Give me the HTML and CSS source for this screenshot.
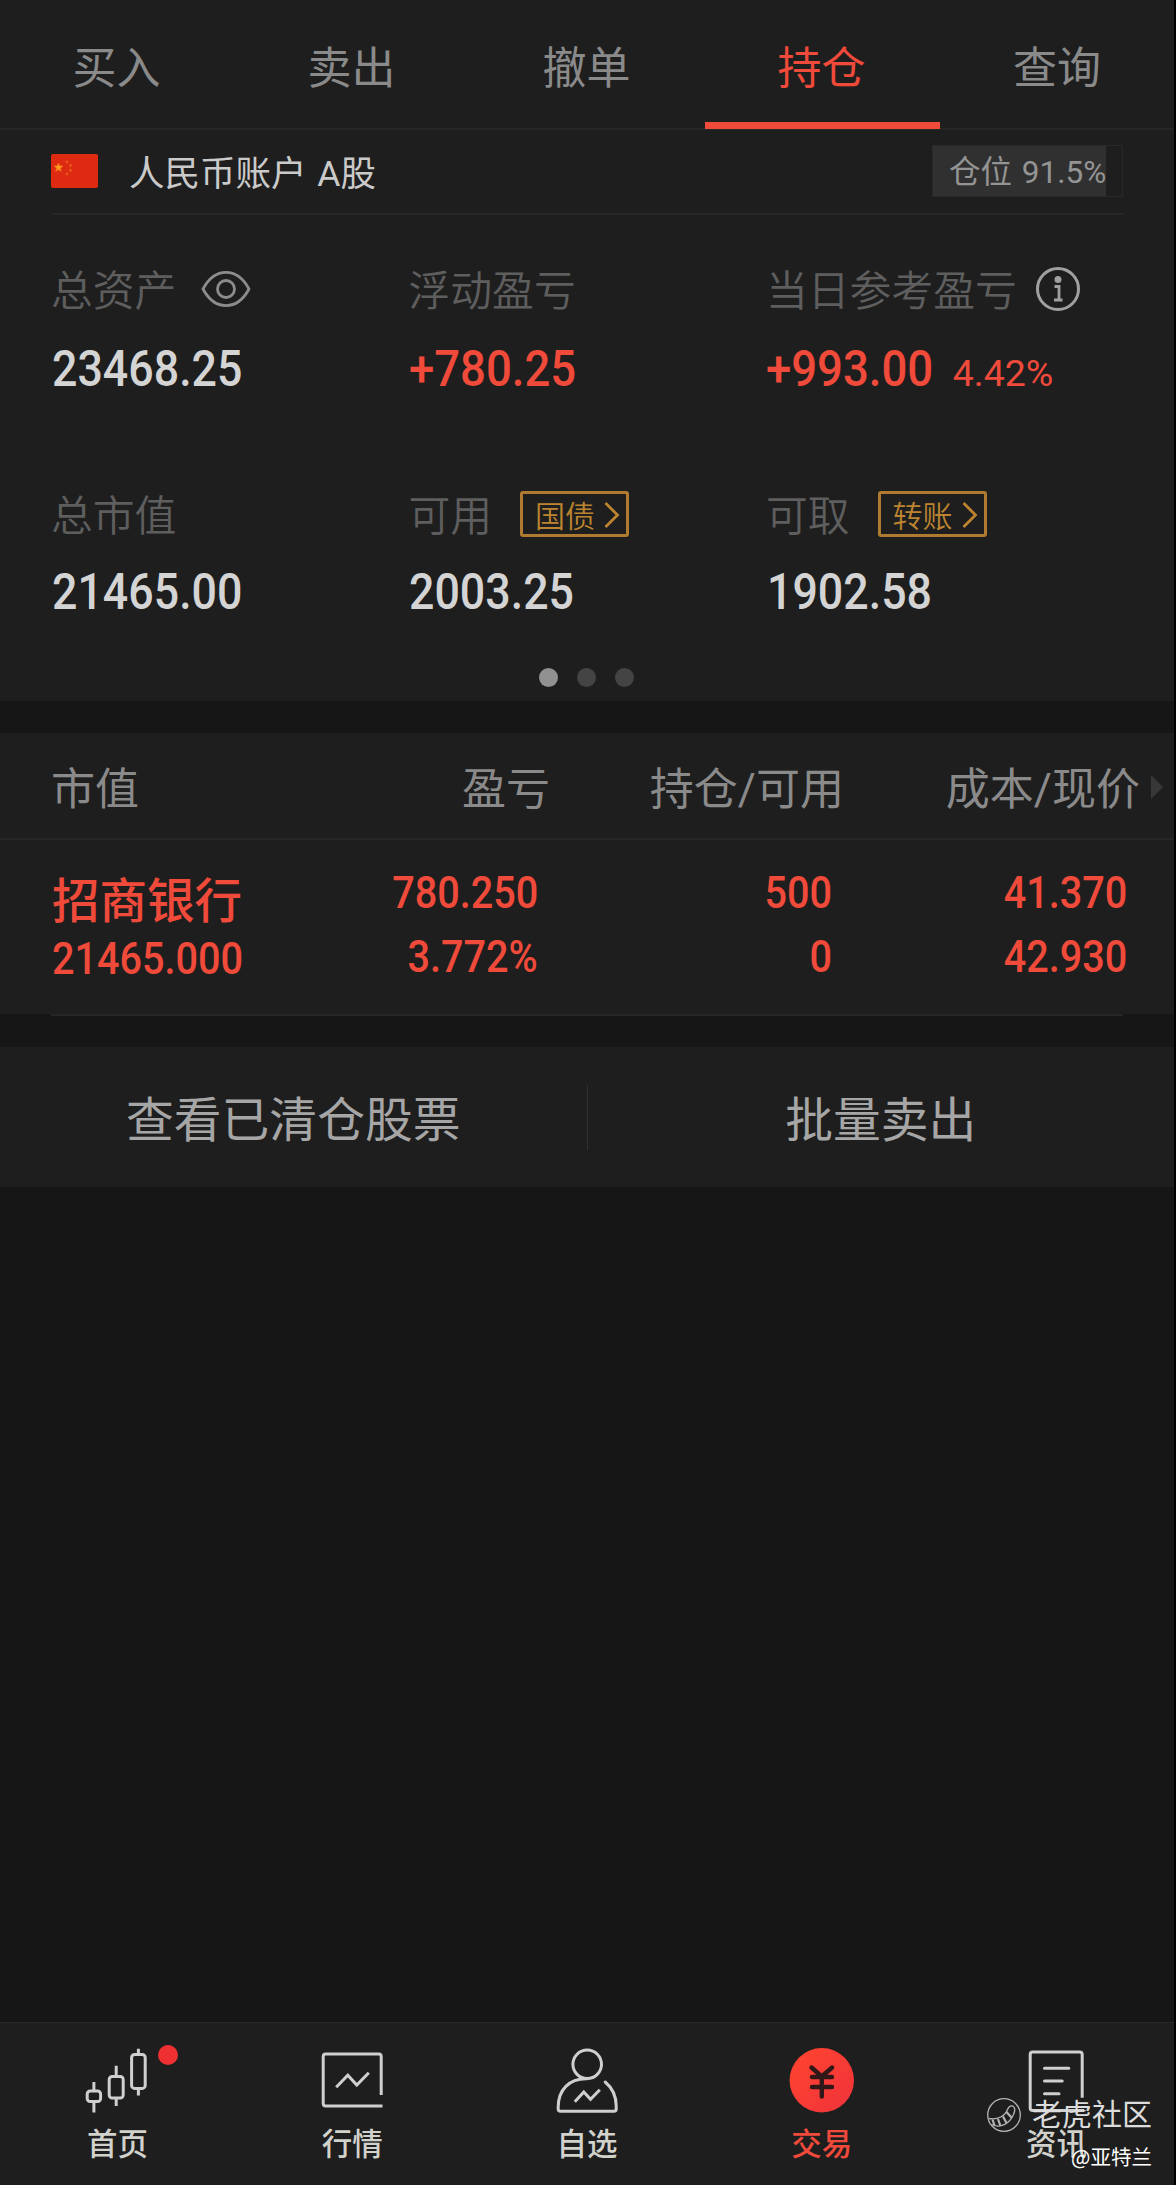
FILE: index.html
```html
<!DOCTYPE html>
<html lang="zh-CN">
<head>
<meta charset="utf-8">
<title>持仓</title>
<link rel="stylesheet" href="styles.css">
</head>
<body>
<div class="app">
  <nav class="tabs">
    <a class="tab">买入</a>
    <a class="tab">卖出</a>
    <a class="tab">撤单</a>
    <a class="tab tab-active">持仓</a>
    <a class="tab">查询</a>
  </nav>

  <section class="summary">
    <header class="account">
      <svg class="flag" viewBox="0 0 47 34">
        <rect width="47" height="34" rx="2" fill="#df2a12"/>
        <path d="M7.500 9l1.300 2.800 3.200.2-2.400 2.200.7 3.200-2.800-1.600-2.800 1.600.8-3.200-2.500-2.200 3.200-.2z" fill="#ff9a20" stroke="#f06018" stroke-width=".8"/>
        <g fill="#e8581a"><circle cx="16" cy="8" r="1.400"/><circle cx="19.500" cy="11.500" r="1.400"/><circle cx="19.500" cy="16.500" r="1.400"/><circle cx="16" cy="20" r="1.400"/></g>
      </svg>
      <span class="account-name">人民币账户 A股</span>
      <span class="position"><span class="position-fill" style="width:91.5%"></span><span class="position-text">仓位 91.5%</span></span>
    </header>
    <div class="metrics">
      <div class="metric">
        <div class="label">总资产
          <svg class="eye" viewBox="0 0 50 38" fill="none" stroke="#8c8c8c" stroke-width="2.800"><path d="M2 19C9 6 17 2.400 25 2.400S41 6 48 19C41 32 33 35.600 25 35.600S9 32 2 19z" stroke-linejoin="round"/><circle cx="25" cy="19" r="8.500"/></svg>
        </div>
        <div class="value"><span class="num">23468.25</span></div>
      </div>
      <div class="metric">
        <div class="label">浮动盈亏</div>
        <div class="value red"><span class="num signed">+780.25</span></div>
      </div>
      <div class="metric">
        <div class="label">当日参考盈亏
          <svg class="info" viewBox="0 0 46 46"><circle cx="23" cy="23" r="20.500" fill="none" stroke="#a0a0a0" stroke-width="3"/><circle cx="23" cy="13.500" r="3.500" fill="#a0a0a0"/><path d="M19.500 20.500h4.500v13M19 34h8.500" fill="none" stroke="#a0a0a0" stroke-width="2.800"/></svg>
        </div>
        <div class="value red"><span class="num signed">+993.00</span><span class="percent">4.42%</span></div>
      </div>
      <div class="metric">
        <div class="label">总市值</div>
        <div class="value"><span class="num">21465.00</span></div>
      </div>
      <div class="metric">
        <div class="label">可用
          <a class="chip">国债<svg class="chevron" viewBox="0 0 16 28"><path d="M1.500 2l12 12-12 12" fill="none" stroke="#bc8430" stroke-width="2.800"/></svg></a>
        </div>
        <div class="value"><span class="num">2003.25</span></div>
      </div>
      <div class="metric">
        <div class="label">可取
          <a class="chip">转账<svg class="chevron" viewBox="0 0 16 28"><path d="M1.500 2l12 12-12 12" fill="none" stroke="#bc8430" stroke-width="2.800"/></svg></a>
        </div>
        <div class="value"><span class="num">1902.58</span></div>
      </div>
    </div>
    <div class="dots"><i class="dot dot-on"></i><i class="dot"></i><i class="dot"></i></div>
  </section>

  <section class="holdings">
    <div class="row head">
      <span>市值</span><span>盈亏</span><span>持仓/可用</span><span>成本/现价</span>
      <svg class="more" viewBox="0 0 12 24"><path d="M0 0l12 12L0 24z" fill="#383838"/></svg>
    </div>
    <div class="row stock">
      <div class="cell"><b class="name">招商银行</b><span class="num">21465.000</span></div>
      <div class="cell"><span class="num">780.250</span><span class="num">3.772%</span></div>
      <div class="cell"><span class="num">500</span><span class="num">0</span></div>
      <div class="cell"><span class="num">41.370</span><span class="num">42.930</span></div>
    </div>
    <div class="rule"></div>
  </section>

  <section class="actions">
    <a class="action">查看已清仓股票</a>
    <i class="divider"></i>
    <a class="action">批量卖出</a>
  </section>

  <nav class="bottom">
    <a class="item">
      <svg class="icon" viewBox="0 0 80 76"><rect x="10.200" y="51" width="13.400" height="10.500" rx="3"/><path d="M16.900 42v9M16.900 61.500v11"/><rect x="32.200" y="36.400" width="14" height="21.600" rx="3"/><path d="M39.200 25.700v10.700M39.200 58v8"/><rect x="54.600" y="14.400" width="13.600" height="34" rx="3"/><path d="M61.400 8.700v5.700M61.400 48.400v7"/></svg>
      <i class="badge"></i>首页
    </a>
    <a class="item">
      <svg class="icon" viewBox="0 0 80 76"><path d="M69.200 55V16.500q0-2.500-2.500-2.500h-53q-2.500 0-2.500 2.500v47q0 2.500 2.500 2.500h56.800"/><path d="M24.200 47.300l11.600-12 9 9.700 12-12.300"/></svg>行情
    </a>
    <a class="item">
      <svg class="icon" viewBox="0 0 80 76"><circle cx="40.200" cy="24.300" r="14.300"/><path d="M40.200 38.800C22 38.300 11.200 50 11.200 67v2q0 2.300 2.300 2.300H67q2.200 0 2.200-2.300v-3c0-10-3.800-18-11-24" stroke-linecap="round"/><path d="M27.800 61.700l9-9.700 6.700 7.300 9.300-9.600"/></svg>自选
    </a>
    <a class="item item-active">
      <svg class="icon" viewBox="0 0 80 76"><defs><linearGradient id="coin" x1="0" y1="0" x2="1" y2="1"><stop offset="0" stop-color="#ff4530"/><stop offset="1" stop-color="#f0323a"/></linearGradient></defs><circle cx="39.800" cy="40.300" r="32.200" fill="url(#coin)" stroke="none"/><path d="M29.500 27.500l10.300 9 10.300-9M39.800 36.500v20M30 37h20M30 47h20" stroke="#301818" stroke-width="4.400" stroke-linecap="round"/></svg>交易
    </a>
    <a class="item">
      <svg class="icon" viewBox="0 0 80 76"><path d="M65.200 57.700V14.500q0-2.500-2.500-2.500h-47q-2.500 0-2.500 2.500V68q0 2.500 2.500 2.500H67"/><path d="M27.500 28.300h24.300M27.500 41h17.700M27.500 53.700H42" stroke-linecap="round"/></svg>资讯
    </a>
    <div class="watermark">
      <div class="community"><svg class="tiger" viewBox="0 0 36 36" fill="none" stroke="#b4b4b4" stroke-width="1.300"><circle cx="18" cy="18" r="16.300"/><path d="M3 21.500C12 23 19 19 21.500 12.500q2-4.500 5.500-3.300 3.200 2 .6 8C24 26 15 32 5.500 27.500"/><path d="M6.500 22.500l2 6M12 22l2.500 7M17 19.500l3.500 6.500M20.500 15l5 5.500" stroke-width="2.200"/></svg>老虎社区</div>
      <div class="author">@亚特兰</div>
    </div>
  </nav>
</div>
</body>
</html>
```
FILE: styles.css
```css
* { box-sizing: border-box; }
body {
  margin: 0;
  background: #000;
  font-family: Roboto, "Noto Sans CJK SC", sans-serif;
  font-weight: 400;
}
svg { display: block; flex: none; }
.app {
  width: 1174px;
  height: 2185px;
  display: flex;
  flex-direction: column;
  background: #161616;
}
.tabs {
  display: flex;
  height: 130px;
  border-bottom: 2px solid #262626;
  background: #1e1e1e;
}
.tab {
  flex: 0 0 235px;
  height: 129px;
  padding: 37px 2px 0 0;
  font-size: 44px;
  line-height: 64px;
  text-align: center;
  color: #8a8a8a;
}
.tab:last-child { flex: 1; padding-right: 0; }
.tab-active { color: #f04a3b; border-bottom: 7px solid #f04a3b; }

.summary { height: 571px; padding: 0 51px; background: #1e1e1e; }
.account {
  display: flex;
  align-items: center;
  height: 85px;
  padding-bottom: 2px;
  border-bottom: 2px solid #262626;
}
.flag { width: 47px; height: 34px; }
.account-name { margin-left: 31px; font-size: 35.5px; word-spacing: 2px; color: #cacaca; }
.position {
  position: relative;
  width: 191px;
  height: 52px;
  margin-left: auto;
  border: 1px solid #292929;
}
.position-fill { position: absolute; left: 0; top: 0; height: 100%; background: #303030; }
.position-text {
  position: relative;
  display: block;
  padding: 2px 0 0 16px;
  font-size: 31.5px;
  line-height: 50px;
  white-space: nowrap;
  word-spacing: 2px;
  color: #949494;
}
.metrics {
  display: grid;
  grid-template-columns: 357.5px 357.5px 1fr;
  grid-template-rows: 225px 187px;
  padding-top: 41px;
}
.label {
  display: flex;
  align-items: center;
  height: 64px;
  font-size: 41.8px;
  font-weight: 350;
  white-space: nowrap;
  color: #5e5e5e;
}
.eye { width: 50px; height: 38px; margin: 1px 0 0 25px; }
.info { width: 46px; height: 46px; margin: 1px 0 0 18px; }
.value {
  display: flex;
  align-items: baseline;
  height: 60px;
  margin-top: 19px;
  color: #d4d4d4;
}
.metric:nth-child(n+4) .value { margin-top: 17px; }
.metric:nth-child(3n+1) .value { padding-left: 1px; }
.metric:last-child .value { padding-left: 1px; }
.num {
  display: block;
  font-size: 50px;
  line-height: 60px;
  font-weight: 500;
  transform: scaleX(.895);
  transform-origin: left;
}
.signed { transform: scaleX(.91); }
.red { color: #f04a3b; }
.percent { font-size: 37.5px; margin-left: 3px; }
.chip {
  display: flex;
  align-items: center;
  width: 109px;
  height: 46px;
  margin: 2px 0 0 28px;
  padding-left: 12px;
  gap: 9px;
  border: 3px solid #b07a30;
  border-radius: 3px;
  font-size: 30px;
  color: #bc8430;
}
.chevron { width: 16px; height: 28px; margin-top: 1px; }
.dots { display: flex; justify-content: center; gap: 19px; padding-right: 1px; }
.dot { width: 19px; height: 19px; border-radius: 50%; background: #444; }
.dot-on { background: #919191; }

.holdings { height: 315px; margin-top: 32px; background: linear-gradient(#1e1e1e 281px, #161616 281px); }
.row { display: grid; position: relative; }
.head {
  grid-template-columns: 300px 250px 294px 296px;
  align-items: center;
  height: 107px;
  border-bottom: 2px solid #262626;
  font-size: 44px;
  text-align: right;
  color: #8a8a8a;
}
.head > span:first-child { text-align: left; padding-left: 51px; }
.more { position: absolute; right: 11px; top: 42px; width: 12px; height: 24px; }
.stock {
  grid-template-columns: 300px 238px 294px 295px;
  height: 174px;
  color: #f04a3b;
}
.cell { display: flex; flex-direction: column; align-items: flex-end; padding-top: 21px; }
.cell .num { font-size: 44px; line-height: 64px; transform: scaleX(.9); transform-origin: right; }
.cell:first-child { align-items: flex-start; padding: 30px 0 0 52px; }
.cell:first-child .num { transform-origin: left; line-height: 50px; }
.name { font-size: 47.5px; line-height: 64px; font-weight: 500; }
.rule { height: 2px; margin: 0 51px; background: #262626; }

.actions {
  display: flex;
  align-items: center;
  height: 140px;
  margin-top: -1px;
  background: #1e1e1e;
}
.action { flex: 1; padding-bottom: 2px; font-size: 47.8px; text-align: center; color: #a6a6a6; }
.divider { width: 1px; height: 65px; background: #303030; }

.bottom {
  position: relative;
  display: flex;
  height: 163px;
  margin-top: auto;
  border-top: 1px solid #282828;
  background: #1e1e1e;
}
.item {
  position: relative;
  flex: 1;
  display: flex;
  flex-direction: column;
  align-items: center;
  padding-top: 17px;
  font-size: 30.5px;
  line-height: 57px;
  font-weight: 500;
  color: #d2d2cc;
}
.item-active { color: #f04a3b; }
.icon { width: 80px; height: 76px; fill: none; stroke: #cfcfcf; stroke-width: 3; }
.badge {
  position: absolute;
  left: 158px;
  top: 22px;
  width: 20px;
  height: 20px;
  border-radius: 50%;
  background: #ee3033;
}
.watermark {
  position: absolute;
  right: 22px;
  top: 72px;
  display: flex;
  flex-direction: column;
  align-items: flex-end;
  color: #dcdcdc;
}
.community { display: flex; align-items: center; gap: 10px; font-size: 30px; line-height: 40px; font-weight: 400; }
.tiger { width: 36px; height: 36px; }
.author { font-family: "Noto Sans CJK SC", sans-serif; font-size: 20.5px; line-height: 30px; margin-top: 6px; color: #fff; }
```
